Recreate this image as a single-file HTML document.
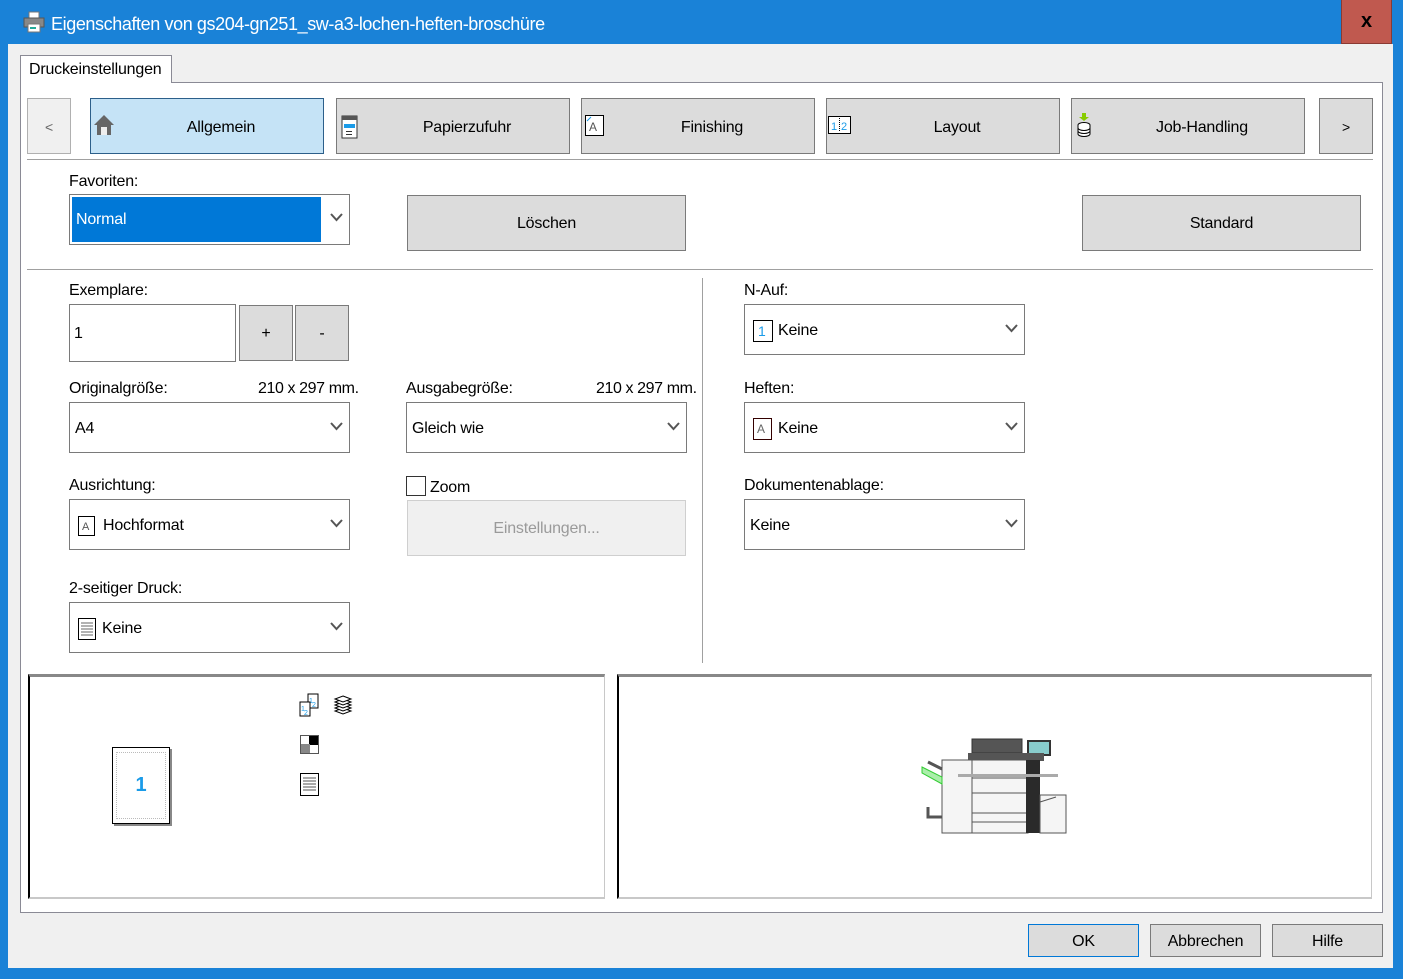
<!DOCTYPE html>
<html><head><meta charset="utf-8"><style>
*{box-sizing:border-box;margin:0;padding:0}
body{width:1403px;height:979px;position:relative;overflow:hidden;background:#1a82d7;font-family:"Liberation Sans",sans-serif;font-size:16px;color:#000;letter-spacing:-0.2px}
.a{position:absolute}
.btn{position:absolute;background:#dcdcdc;border:1px solid #7a7a7a;display:flex;align-items:center;justify-content:center;padding-top:2px}
.nav{padding-left:28px;padding-top:4px}
.sel{position:absolute;background:#fff;border:1px solid #7a7a7a;display:flex;align-items:center;padding-left:5px;padding-top:2px}
.hl{position:absolute;height:1px;background:#a0a0a0}
.lbl{position:absolute;line-height:18px;margin-top:1px}
</style></head><body>
<div class="a" style="left:8px;top:44px;width:1385px;height:924px;background:#f0f0f0"></div>
<svg class="a" style="left:22px;top:10px" width="24" height="24" viewBox="0 0 24 24"><rect x="7" y="2" width="10" height="6" fill="#fff" stroke="#777"/><rect x="2" y="8" width="20" height="9" fill="#888" stroke="#555"/><rect x="6" y="14" width="12" height="8" fill="#fff" stroke="#777"/><rect x="8" y="17" width="6" height="2" fill="#2a9"/></svg>
<div class="a" style="left:51px;top:13px;color:#fff;font-size:18px;line-height:22px;letter-spacing:-0.4px">Eigenschaften von gs204-gn251_sw-a3-lochen-heften-broschüre</div>
<div class="a" style="left:1341px;top:0;width:51px;height:44px;background:#c0594f;border:1px solid #8a3a33;border-top:none;color:#000;font-size:20px;font-weight:bold;display:flex;align-items:center;justify-content:center">x</div>
<div class="a" style="left:20px;top:82px;width:1363px;height:831px;background:#fff;border:1px solid #8a8a95"></div>
<div class="a" style="left:20px;top:55px;width:152px;height:28px;background:#fff;border:1px solid #8a8a95;border-bottom:none;padding:5px 0 0 8px">Druckeinstellungen</div>
<div class="btn" style="left:27px;top:98px;width:44px;height:56px;background:#f0f0f0;border-color:#b0b0b0;color:#666;font-size:14px">&lt;</div>
<div class="btn nav" style="left:90px;top:98px;width:234px;height:56px;background:#c5e3f6;border-color:#2c5f8a">Allgemein</div>
<svg class="a" style="left:93px;top:114px" width="22" height="22" viewBox="0 0 22 22"><path d="M1 11 L11 1 L21 11 L18 11 L18 21 L4 21 L4 11Z" fill="#666"/><rect x="8" y="13" width="6" height="8" fill="#eee"/></svg>
<div class="btn nav" style="left:336px;top:98px;width:234px;height:56px">Papierzufuhr</div>
<svg class="a" style="left:341px;top:115px" width="18" height="24" viewBox="0 0 18 24"><rect x="1" y="1" width="15" height="22" fill="#fff" stroke="#333"/><rect x="1" y="1" width="15" height="4" fill="#555"/><rect x="3" y="9" width="11" height="4" fill="#1a9be8"/><rect x="5" y="16" width="6" height="1" fill="#333"/><rect x="5" y="19" width="6" height="1" fill="#333"/></svg>
<div class="btn nav" style="left:581px;top:98px;width:234px;height:56px">Finishing</div>
<svg class="a" style="left:585px;top:115px" width="19" height="21" viewBox="0 0 19 21"><rect x="0.5" y="0.5" width="18" height="20" fill="#fff" stroke="#000"/><path d="M2 6 L6 2" stroke="#1a9be8"/><text x="4" y="16" font-size="12" fill="#555" font-family="Liberation Sans">A</text></svg>
<div class="btn nav" style="left:826px;top:98px;width:234px;height:56px">Layout</div>
<svg class="a" style="left:828px;top:116px" width="23" height="18" viewBox="0 0 23 18"><rect x="0.5" y="0.5" width="22" height="17" fill="#fff" stroke="#000"/><path d="M11.5 2 V16" stroke="#000" stroke-dasharray="1 1"/><text x="3" y="14" font-size="11" fill="#1a9be8" font-family="Liberation Sans">1</text><text x="13" y="14" font-size="11" fill="#1a9be8" font-family="Liberation Sans">2</text></svg>
<div class="btn nav" style="left:1071px;top:98px;width:234px;height:56px">Job-Handling</div>
<svg class="a" style="left:1076px;top:112px" width="18" height="25" viewBox="0 0 18 25"><path d="M6 1 H10 V5 H13 L8 9 L3 5 H6Z" fill="#8c0"/><ellipse cx="8" cy="13" rx="6" ry="2.5" fill="#fff" stroke="#000"/><path d="M2 13 V22 A6 2.5 0 0 0 14 22 V13" fill="#fff" stroke="#000"/><path d="M2 16 A6 2.5 0 0 0 14 16 M2 19 A6 2.5 0 0 0 14 19" fill="none" stroke="#000"/></svg>
<div class="btn" style="left:1319px;top:98px;width:54px;height:56px;font-size:14px">&gt;</div>
<div class="hl" style="left:27px;top:159px;width:1346px"></div>
<div class="lbl" style="left:69px;top:172px">Favoriten:</div>
<div class="sel" style="left:69px;top:194px;width:281px;height:51px;padding:2px"><div style="width:249px;height:45px;background:#0078d7;color:#fff;padding:14px 0 0 4px">Normal</div></div>
<svg class="a" style="left:330px;top:213px" width="13" height="9"><path d="M1 1 L6.5 7 L12 1" fill="none" stroke="#555" stroke-width="2"/></svg>
<div class="btn" style="left:407px;top:195px;width:279px;height:56px">Löschen</div>
<div class="btn" style="left:1082px;top:195px;width:279px;height:56px">Standard</div>
<div class="hl" style="left:27px;top:269px;width:1346px"></div>
<div class="lbl" style="left:69px;top:281px">Exemplare:</div>
<div class="sel" style="left:69px;top:304px;width:167px;height:58px;padding-left:4px">1</div>
<div class="btn" style="left:239px;top:305px;width:54px;height:56px">+</div>
<div class="btn" style="left:295px;top:305px;width:54px;height:56px">-</div>
<div class="lbl" style="left:69px;top:379px">Originalgröße:</div>
<div class="lbl" style="left:258px;top:379px;letter-spacing:-0.4px">210 x 297 mm.</div>
<div class="sel" style="left:69px;top:402px;width:281px;height:51px">A4</div>
<div class="lbl" style="left:406px;top:379px">Ausgabegröße:</div>
<div class="lbl" style="left:596px;top:379px;letter-spacing:-0.4px">210 x 297 mm.</div>
<div class="sel" style="left:406px;top:402px;width:281px;height:51px">Gleich wie</div>
<div class="lbl" style="left:69px;top:476px">Ausrichtung:</div>
<div class="sel" style="left:69px;top:499px;width:281px;height:51px;padding-left:8px"><svg width="17" height="20" viewBox="0 0 17 20" style="margin-right:8px"><rect x="0.5" y="0.5" width="16" height="19" fill="#fff" stroke="#000"/><text x="4" y="14" font-size="11" fill="#555" font-family="Liberation Sans">A</text></svg>Hochformat</div>
<div class="a" style="left:406px;top:476px;width:20px;height:20px;border:1px solid #333;background:#fff"></div>
<div class="lbl" style="left:430px;top:478px">Zoom</div>
<div class="btn" style="left:407px;top:500px;width:279px;height:56px;background:#f0f0f0;border-color:#cfcfcf;color:#9a9a9a">Einstellungen...</div>
<div class="lbl" style="left:69px;top:579px">2-seitiger Druck:</div>
<div class="sel" style="left:69px;top:602px;width:281px;height:51px;padding-left:8px"><svg width="18" height="22" viewBox="0 0 18 22" style="margin-right:6px"><rect x="0.5" y="0.5" width="17" height="21" fill="#fff" stroke="#000"/><path d="M3 5H15M3 8H15M3 11H15M3 14H15M3 17H15" stroke="#666"/></svg>Keine</div>
<div class="a" style="left:702px;top:278px;width:1px;height:385px;background:#a0a0a0"></div>
<div class="lbl" style="left:744px;top:281px">N-Auf:</div>
<div class="sel" style="left:744px;top:304px;width:281px;height:51px;padding-left:8px"><svg width="20" height="22" viewBox="0 0 20 22" style="margin-right:5px"><rect x="0.5" y="0.5" width="19" height="21" fill="#fff" stroke="#000"/><text x="5" y="16" font-size="14" fill="#1a9be8" font-family="Liberation Sans">1</text></svg>Keine</div>
<div class="lbl" style="left:744px;top:379px">Heften:</div>
<div class="sel" style="left:744px;top:402px;width:281px;height:51px;padding-left:8px"><svg width="19" height="22" viewBox="0 0 19 22" style="margin-right:6px"><rect x="0.5" y="0.5" width="18" height="21" fill="#fff" stroke="#300"/><text x="4" y="15" font-size="12" fill="#666" font-family="Liberation Sans">A</text></svg>Keine</div>
<div class="lbl" style="left:744px;top:476px">Dokumentenablage:</div>
<div class="sel" style="left:744px;top:499px;width:281px;height:51px">Keine</div>
<svg class="a" style="left:330px;top:422px" width="13" height="9"><path d="M1 1 L6.5 7 L12 1" fill="none" stroke="#555" stroke-width="2"/></svg>
<svg class="a" style="left:667px;top:422px" width="13" height="9"><path d="M1 1 L6.5 7 L12 1" fill="none" stroke="#555" stroke-width="2"/></svg>
<svg class="a" style="left:330px;top:519px" width="13" height="9"><path d="M1 1 L6.5 7 L12 1" fill="none" stroke="#555" stroke-width="2"/></svg>
<svg class="a" style="left:330px;top:622px" width="13" height="9"><path d="M1 1 L6.5 7 L12 1" fill="none" stroke="#555" stroke-width="2"/></svg>
<svg class="a" style="left:1005px;top:324px" width="13" height="9"><path d="M1 1 L6.5 7 L12 1" fill="none" stroke="#555" stroke-width="2"/></svg>
<svg class="a" style="left:1005px;top:422px" width="13" height="9"><path d="M1 1 L6.5 7 L12 1" fill="none" stroke="#555" stroke-width="2"/></svg>
<svg class="a" style="left:1005px;top:519px" width="13" height="9"><path d="M1 1 L6.5 7 L12 1" fill="none" stroke="#555" stroke-width="2"/></svg>
<div class="a" style="left:28px;top:674px;width:577px;height:225px;background:#fff;border-top:3px solid #888;border-left:2px solid #000;border-right:1px solid #c8c8c8;border-bottom:2px solid #c8c8c8"></div>
<div class="a" style="left:617px;top:674px;width:755px;height:225px;background:#fff;border-top:3px solid #888;border-left:2px solid #000;border-right:1px solid #c8c8c8;border-bottom:2px solid #c8c8c8"></div>
<div class="a" style="left:114px;top:749px;width:58px;height:77px;background:#888"></div>
<div class="a" style="left:112px;top:747px;width:58px;height:77px;background:#fff;border:1px solid #000"></div>
<div class="a" style="left:116px;top:752px;width:50px;height:67px;border:1px dotted #bbb;color:#1a9be8;font-weight:bold;font-size:20px;display:flex;align-items:center;justify-content:center">1</div>
<svg class="a" style="left:298px;top:692px" width="60" height="28" viewBox="0 0 60 28"><rect x="10" y="2" width="10" height="14" fill="#fff" stroke="#000"/><text x="11" y="11" font-size="7" fill="#1a9be8">1</text><text x="14" y="15" font-size="7" fill="#1a9be8">2</text><rect x="2" y="10" width="10" height="14" fill="#fff" stroke="#000"/><text x="3" y="19" font-size="7" fill="#1a9be8">1</text><text x="6" y="23" font-size="7" fill="#1a9be8">2</text><g fill="#fff" stroke="#000"><path d="M45 16 L53 19 L45 22 L37 19Z"/><path d="M45 13 L53 16 L45 19 L37 16Z"/><path d="M45 10 L53 13 L45 16 L37 13Z"/><path d="M45 7 L53 10 L45 13 L37 10Z"/><path d="M45 4 L53 7 L45 10 L37 7Z"/></g></svg>
<svg class="a" style="left:300px;top:735px" width="19" height="19"><rect x="0.5" y="0.5" width="18" height="18" fill="#fff" stroke="#555"/><rect x="9" y="1" width="9" height="9" fill="#000"/><rect x="1" y="9" width="9" height="9" fill="#888"/></svg>
<svg class="a" style="left:300px;top:773px" width="19" height="23"><rect x="0.5" y="0.5" width="18" height="22" fill="#fff" stroke="#000"/><path d="M3 5H16M3 8H16M3 11H16M3 14H16M3 17H16" stroke="#555"/></svg>
<svg class="a" style="left:918px;top:737px" width="152" height="100" viewBox="0 0 152 100"><rect x="54" y="2" width="50" height="14" fill="#555" stroke="#333"/><rect x="110" y="4" width="22" height="14" fill="#8cc" stroke="#333" stroke-width="2"/><rect x="50" y="16" width="76" height="8" fill="#555"/><rect x="24" y="23" width="50" height="73" fill="#f5f5f5" stroke="#555"/><rect x="54" y="23" width="56" height="73" fill="#f5f5f5" stroke="#555"/><rect x="108" y="23" width="14" height="73" fill="#2a2a2a"/><rect x="122" y="58" width="26" height="38" fill="#f5f5f5" stroke="#555"/><rect x="40" y="37" width="100" height="3" fill="#aaa"/><path d="M54 41H108M54 56H108M54 76H108M54 85H108" stroke="#555"/><path d="M4 30 L24 40 L24 47 L4 36Z" fill="#aea" stroke="#3c3"/><path d="M10 25 L24 32" stroke="#555" stroke-width="3"/><path d="M10 70 V80 H24" fill="none" stroke="#555" stroke-width="3"/><path d="M122 65 L138 60" stroke="#555"/></svg>
<div class="btn" style="left:1028px;top:924px;width:111px;height:33px;border-color:#0078d7">OK</div>
<div class="btn" style="left:1150px;top:924px;width:111px;height:33px">Abbrechen</div>
<div class="btn" style="left:1272px;top:924px;width:111px;height:33px">Hilfe</div>
</body></html>
